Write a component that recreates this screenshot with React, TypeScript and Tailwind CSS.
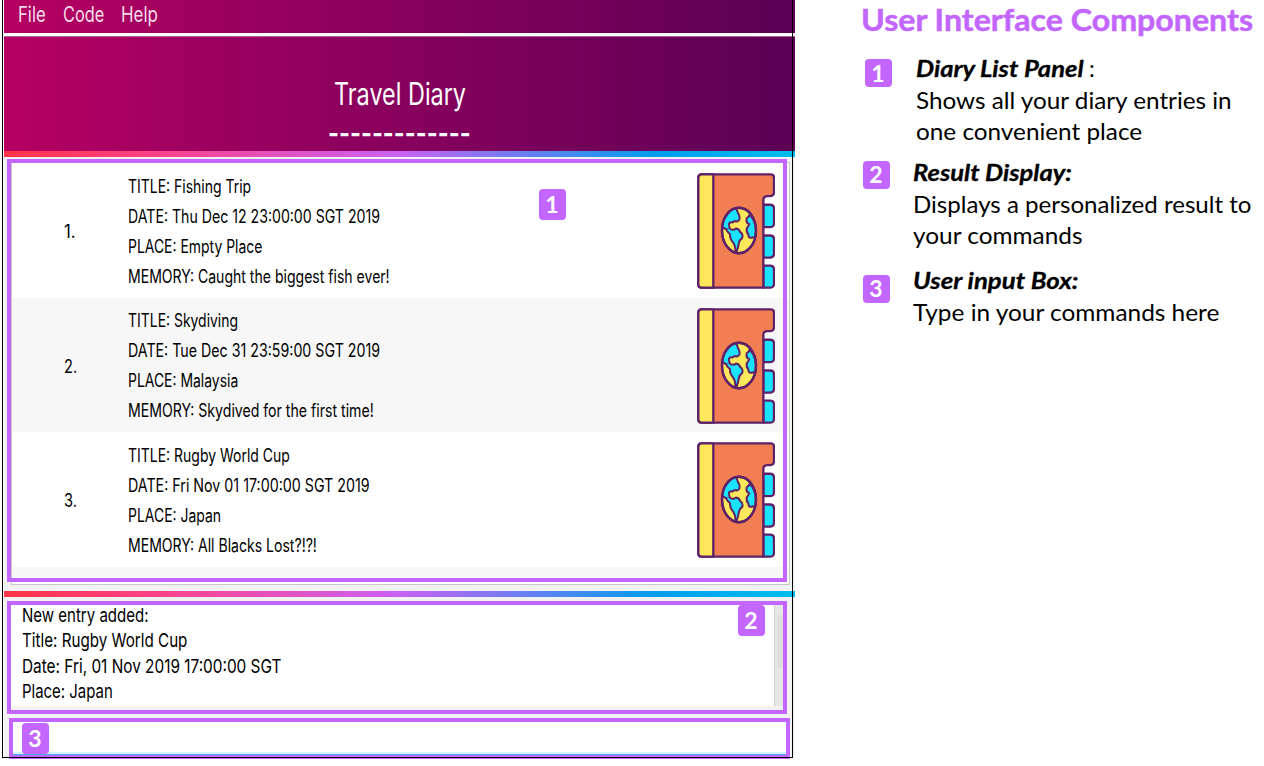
import { useLayoutEffect, useRef, useState } from "react";
import type { ReactNode } from "react";

/* Condenses or widens a single line so that it occupies exactly `width` pixels. */
function Fit({ width, className = "", children }: { width: number; className?: string; children: ReactNode }) {
  const ref = useRef<HTMLSpanElement>(null);
  const [scale, setScale] = useState(1);
  useLayoutEffect(() => {
    if (ref.current) setScale(width / ref.current.offsetWidth);
  }, [width]);
  return (
    <div className={`whitespace-nowrap ${className}`} style={{ width }}>
      <span ref={ref} className="inline-block origin-left" style={{ transform: `scaleX(${scale})` }}>
        {children}
      </span>
    </div>
  );
}

function Badge({ n, className = "h-[31px]" }: { n: number; className?: string }) {
  return (
    <div
      className={`flex w-[27px] shrink-0 items-center justify-center rounded-[4px] bg-[#c266ff] pr-px font-[Lato,sans-serif] text-[23px] leading-none font-bold text-white ${className}`}
    >
      {n}
    </div>
  );
}

function DiaryIcon() {
  return (
    <svg viewBox="52 69 234 347" preserveAspectRatio="none" className="h-[116px] w-[78px]" fill="none" stroke="#5f2167" strokeWidth="7" strokeLinejoin="round">
      <path fill="#1ae3ff" d="M251 164H271Q283 164 283 176V219Q283 231 271 231H251Z" />
      <path fill="#1ae3ff" d="M251 256H271Q283 256 283 268V310Q283 322 271 322H251Z" />
      <path fill="#1ae3ff" d="M251 346H271Q283 346 283 358V400Q283 412 271 412H251Z" />
      <path fill="#f27f53" d="M66 73H273Q283 73 283 83V126Q283 138 271 138H263Q251 138 251 150V412H66Q56 412 56 402V83Q56 73 66 73Z" />
      <path fill="#fde85c" d="M66 73H101V412H66Q56 412 56 402V83Q56 73 66 73Z" />
      <g transform="translate(1 0)">
        <ellipse cx="177" cy="241" rx="51" ry="68" fill="#fde85c" />
        <path fill="#1ae3ff" strokeWidth="6" d="M168 174C173 182 172 189 177 194Q183 211 171 214Q163 211 158 217Q145 215 147 226L150 237Q139 240 135 235L127 232C128 204 142 181 168 174Z" />
        <path fill="#1ae3ff" strokeWidth="6" d="M150 237Q162 241 168 235Q179 237 180 245Q190 251 187 263Q177 270 176 281Q175 292 169 306H166Q167 288 160 278Q149 266 150 252Q141 246 138 236" />
        <path fill="#1ae3ff" strokeWidth="6" d="M209 193Q206 202 200 204Q197 219 208 222Q204 231 200 235Q199 247 205 252Q205 266 218 262L226 260Q233 220 209 193Z" />
        <ellipse cx="177" cy="241" rx="51" ry="68" />
      </g>
    </svg>
  );
}

type Line = [string, number];

const entries: Line[][] = [
  [
    ["TITLE: Fishing Trip", 123.5],
    ["DATE: Thu Dec 12 23:00:00 SGT 2019", 252],
    ["PLACE: Empty Place", 134],
    ["MEMORY: Caught the biggest fish ever!", 261.5],
  ],
  [
    ["TITLE: Skydiving", 110],
    ["DATE: Tue Dec 31 23:59:00 SGT 2019", 252],
    ["PLACE: Malaysia", 110],
    ["MEMORY: Skydived for the first time!", 245.5],
  ],
  [
    ["TITLE: Rugby World Cup", 161.5],
    ["DATE: Fri Nov 01 17:00:00 SGT 2019", 241.5],
    ["PLACE: Japan", 93],
    ["MEMORY: All Blacks Lost?!?!", 189],
  ],
];

const result: Line[] = [
  ["New entry added:", 126.5],
  ["Title: Rugby World Cup", 165.5],
  ["Date: Fri, 01 Nov 2019 17:00:00 SGT", 259.5],
  ["Place: Japan", 90.5],
];

const header = "bg-[linear-gradient(90deg,#b50062_0%,#88005d_50%,#5b0056_100%)]";
const stripe = "h-[6px] shrink-0 bg-[linear-gradient(90deg,#ff3347_0%,#ff4080_17%,#c962f4_50%,#009ff0_83%,#00beec_100%)]";

function DiaryWindow() {
  return (
    <div className="relative flex h-[760px] w-[797px] shrink-0 flex-col">
      <div className="ml-1 flex h-[757px] w-[791px] flex-col bg-[#f2f2f2]">
        <div className={`flex h-[33px] shrink-0 text-[21.5px] leading-[29px] text-[#f5dcea] ${header}`}>
          <Fit width={28} className="ml-[14px]">File</Fit>
          <Fit width={41} className="ml-[17px]">Code</Fit>
          <Fit width={37} className="ml-[16.5px]">Help</Fit>
        </div>
        <div className="h-[3px] shrink-0 bg-white" />
        <div className={`flex h-[115px] shrink-0 flex-col items-center border-t border-[#b0609a] text-[30.5px] text-white ${header}`}>
          <Fit width={132} className="mt-[37px] h-[40px] leading-[40px]">Travel Diary</Fit>
          <Fit width={143} className="mt-[2px] h-[34px] leading-[34px] font-semibold">-------------</Fit>
        </div>
        <div className={stripe} />
        <div className="mt-[5px] ml-[7px] flex h-[423px] w-[779px] shrink-0 flex-col overflow-hidden border border-[#c8c8c8] bg-white">
          {entries.map((lines, i) => (
            <div key={i} className={`flex h-[134.5px] shrink-0 text-[18px] leading-[30.1px] font-[430] text-black ${i % 2 ? "bg-[#f7f7f7]" : "bg-white"}`}>
              <div className="flex w-[116px] items-center pl-[52px]">
                <Fit width={i ? 13 : 12} className="mt-[4px]">{i + 1}.</Fit>
              </div>
              <div className="flex-1 pt-[8.7px]">
                {lines.map(([text, width]) => (
                  <Fit key={text} width={width} className="h-[30.1px]">{text}</Fit>
                ))}
              </div>
              <div className="mr-[14px] pt-[10px]">
                <DiaryIcon />
              </div>
            </div>
          ))}
          <div className="h-[14px] shrink-0 bg-[#f7f7f7]" />
          <div className="flex-1 bg-white" />
        </div>
        <div className={`mt-[6px] ${stripe}`} />
        <div className="mt-[6px] ml-[7px] flex h-[103px] w-[775px] shrink-0 bg-white">
          <div className="flex-1 pl-[10.5px] text-[19px] leading-[25.4px] font-[430] text-black">
            {result.map(([text, width]) => (
              <Fit key={text} width={width} className="h-[25.4px]">{text}</Fit>
            ))}
          </div>
          <div className="mr-[3px] w-[9px] border-l border-[#d2d2d2] bg-[#e6e6e6]">
            <div className="mt-[11px] ml-[2px] h-[54px] w-[6px] bg-[#dfdfdf]" />
          </div>
        </div>
        <div className="mt-[14px] ml-[7px] h-[34px] w-[775px] shrink-0 border-b-2 border-[#d9eff9] bg-white" />
        <div className="ml-[7px] h-[2px] w-[775px] shrink-0 bg-[#43b1dc]" />
      </div>

      <div className="absolute top-[159px] left-[7px] h-[423px] w-[780px] border-4 border-[#c266ff]" />
      <div className="absolute top-[601px] left-[7px] h-[113px] w-[780px] border-4 border-[#c266ff]" />
      <div className="absolute top-[718px] left-[9px] h-[41px] w-[781px] border-4 border-[#c266ff]" />
      <div className="absolute top-0 left-[2px] h-[758px] w-[791px] border-x border-b border-black" />
      <div className="absolute top-[189px] left-[539px]"><Badge n={1} /></div>
      <div className="absolute top-[605px] left-[738px]"><Badge n={2} /></div>
      <div className="absolute top-[723px] left-[22px]"><Badge n={3} /></div>
    </div>
  );
}

function Legend() {
  return (
    <div className="flex flex-col pl-[65px] font-[Lato,sans-serif] text-[22.8px] leading-[31.3px] text-black">
      <Fit width={392} className="-ml-px h-[53px] text-[31px] leading-[39px] font-bold text-[#c266ff] [-webkit-text-stroke:0.5px_#c266ff]">User Interface Components</Fit>
      <div className="flex pl-[3px]">
        <Badge n={1} className="mt-[6px] h-[28px]" />
        <div className="ml-[24px]">
          <div className="flex">
            <Fit width={167} className="font-bold italic [-webkit-text-stroke:0.3px_black]">Diary List Panel</Fit>
            <span className="ml-[6px]">:</span>
          </div>
          <Fit width={316} className="mt-[0.5px]">Shows all your diary entries in</Fit>
          <Fit width={226}>one convenient place</Fit>
        </div>
      </div>
      <div className="mt-[9.5px] flex pl-[1px]">
        <Badge n={2} className="mt-[4px] h-[28px]" />
        <div className="ml-[23px]">
          <Fit width={159} className="font-bold italic [-webkit-text-stroke:0.3px_black]">Result Display:</Fit>
          <Fit width={338} className="mt-[0.7px]">Displays a personalized result to</Fit>
          <Fit width={170}>your commands</Fit>
        </div>
      </div>
      <div className="mt-[13.3px] flex pl-[1px]">
        <Badge n={3} className="mt-[10px] h-[28px]" />
        <div className="ml-[23px]">
          <Fit width={165} className="font-bold italic [-webkit-text-stroke:0.3px_black]">User input Box:</Fit>
          <Fit width={306} className="mt-[0.7px]">Type in your commands here</Fit>
        </div>
      </div>
    </div>
  );
}

export default function App() {
  return (
    <div className="flex h-[766px] w-[1264px] overflow-hidden bg-white font-[Inter,sans-serif]">
      <DiaryWindow />
      <Legend />
    </div>
  );
}
